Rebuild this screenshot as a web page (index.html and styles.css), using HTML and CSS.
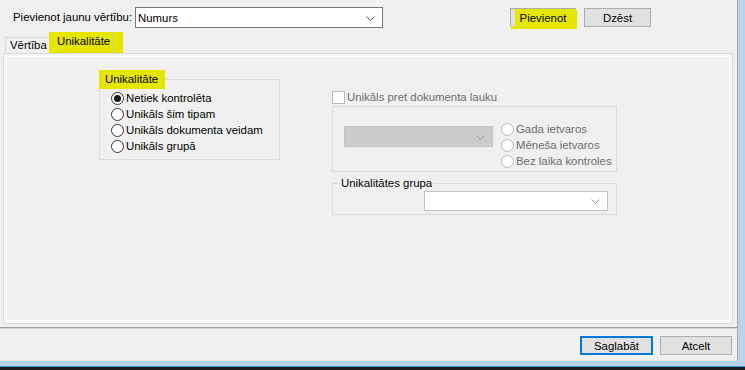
FILE: index.html
```html
<!DOCTYPE html>
<html>
<head>
<meta charset="utf-8">
<link rel="stylesheet" href="styles.css">
</head>
<body>
<div class="screen">
  <div class="window">
    <div class="toprow">
      <span class="lbl">Pievienot jaunu vērtību:</span>
      <div class="combo main-combo"><span class="combo-text">Numurs</span><svg class="chev" width="9" height="5" viewBox="0 0 9 5"><polyline points="0.5,0.5 4.5,4.5 8.5,0.5" fill="none" stroke="#555" stroke-width="1"/></svg></div>
      <button class="btn btn-add">Pievienot</button>
      <button class="btn btn-del">Dzēst</button>
    </div>
    <div class="tabs">
      <div class="tab">Vērtība</div>
      <div class="tab active">Unikalitāte</div>
    </div>
    <div class="tabpanel">
      <div class="page">
        <fieldset class="group uniq">
          <legend class="hl-legend">Unikalitāte</legend>
          <div class="radios">
            <label class="radio checked"><span class="circle"></span>Netiek kontrolēta</label>
            <label class="radio"><span class="circle"></span>Unikāls šim tipam</label>
            <label class="radio"><span class="circle"></span>Unikāls dokumenta veidam</label>
            <label class="radio"><span class="circle"></span>Unikāls grupā</label>
          </div>
        </fieldset>
        <div class="rightcol">
          <label class="check disabled"><span class="box"></span>Unikāls pret dokumenta lauku</label>
          <div class="subbox">
            <div class="combo dis-combo"><svg class="chev" width="9" height="5" viewBox="0 0 9 5"><polyline points="0.5,0.5 4.5,4.5 8.5,0.5" fill="none" stroke="#9a9a9a" stroke-width="1"/></svg></div>
            <div class="radios dis-radios">
              <label class="radio disabled"><span class="circle"></span>Gada ietvaros</label>
              <label class="radio disabled"><span class="circle"></span>Mēneša ietvaros</label>
              <label class="radio disabled"><span class="circle"></span>Bez laika kontroles</label>
            </div>
          </div>
          <fieldset class="group grp">
            <legend class="grp-legend">Unikalitātes grupa</legend>
            <div class="combo grp-combo"><svg class="chev" width="9" height="5" viewBox="0 0 9 5"><polyline points="0.5,0.5 4.5,4.5 8.5,0.5" fill="none" stroke="#9a9a9a" stroke-width="1"/></svg></div>
          </fieldset>
        </div>
      </div>
    </div>
    <div class="separator"></div>
    <div class="footer">
      <button class="btn btn-primary">Saglabāt</button>
      <button class="btn btn-cancel">Atcelt</button>
    </div>
  </div>
</div>
</body>
</html>
```
FILE: styles.css
```css
* { box-sizing: border-box; }
html, body { margin: 0; padding: 0; }
body {
  width: 745px;
  height: 370px;
  overflow: hidden;
  font-family: "Liberation Sans", Arial, sans-serif;
  font-size: 11.4px;
  color: #000;
}
.screen {
  width: 745px;
  height: 370px;
  background: #b9d1ea;
  padding: 0 7px 6px 0;
  border-bottom: 3px solid #1b1b1b;
  box-shadow: inset 0 -1px 0 #3a9ad9;
}
.window {
  width: 738px;
  height: 361px;
  background: #f0f0f0;
  border-right: 1px solid #a9a9a9;
  display: flex;
  flex-direction: column;
}
.toprow {
  display: flex;
  align-items: flex-start;
  padding: 7px 0 0 13px;
  height: 28px;
}
.lbl {
  width: 122px;
  line-height: 21px;
  white-space: nowrap;
}
.combo {
  position: relative;
  background: #fff;
  border: 1px solid #7a7a7a;
  display: flex;
  align-items: center;
}
.chev {
  position: absolute;
  right: 7px;
  top: 50%;
  margin-top: -2px;
}
.main-combo {
  width: 248px;
  height: 21px;
}
.combo-text { padding-left: 2px; }
.btn {
  font-family: inherit;
  font-size: 11.4px;
  color: #000;
  background: #e1e1e1;
  border: 1px solid #adadad;
  height: 19px;
  padding: 0;
  margin: 0;
}
.btn-add {
  margin: 1px 0 0 127px;
  width: 66px;
  background: linear-gradient(to right, #e1e1e1 4px, #e6e600 4px);
  border-right-color: #e6e600;
  border-bottom-color: #e6e600;
  box-shadow: 1px 2px 0 #e6e600;
}
.btn-del {
  margin: 1px 0 0 8px;
  width: 67px;
}
.tabs {
  display: flex;
  align-items: flex-end;
  margin-top: 4px;
  height: 21px;
  padding-left: 5px;
}
.tab {
  height: 16px;
  line-height: 15px;
  padding-left: 4px;
  width: 44px;
  border: 1px solid #d9d9d9;
  border-bottom: none;
  border-right: none;
  background: #f0f0f0;
  white-space: nowrap;
  overflow: hidden;
}
.tab.active {
  height: 21px;
  line-height: 19px;
  width: 74px;
  padding-left: 8px;
  border: none;
  background: #e6e600;
  box-shadow: inset -9px 0 0 #e6e600, inset -10px 0 0 #d0d0a0;
}
.tabpanel {
  margin-left: 3px;
  width: 730px;
  height: 271px;
  border: 1px solid #d9d9d9;
  background: #f8f8f8;
  padding: 2px;
}
.page {
  height: 100%;
  border: 1px solid #fff;
  background: #f0f0f0;
  display: flex;
  align-items: flex-start;
}
.group {
  margin: 0;
  padding: 0;
  border: 1px solid #dcdcdc;
  min-width: 0;
}
.uniq {
  margin: 13px 0 0 92px;
  width: 181px;
  padding-bottom: 5px;
}
.hl-legend {
  background: #e6e600;
  padding: 0 7px 0 6px;
  margin-left: -1px;
  line-height: 19px;
  height: 19px;
}
.radios {
  display: flex;
  flex-direction: column;
}
.uniq .radios {
  margin: 1px 0 0 11px;
}
.radio, .check {
  display: flex;
  align-items: center;
  height: 16px;
  white-space: nowrap;
}
.circle {
  width: 13px;
  height: 13px;
  border: 1px solid #333;
  border-radius: 50%;
  background: #fff;
  margin-right: 2px;
  display: flex;
  align-items: center;
  justify-content: center;
  flex: none;
}
.radio.checked .circle::after {
  content: "";
  width: 7px;
  height: 7px;
  border-radius: 50%;
  background: #1a1a1a;
}
.radio.disabled, .check.disabled { color: #6d6d6d; }
.radio.disabled .circle { border-color: #bcbcbc; }
.rightcol {
  margin: 32px 0 0 52px;
  width: 285px;
  display: flex;
  flex-direction: column;
}
.box {
  width: 13px;
  height: 13px;
  border: 1px solid #bcbcbc;
  background: #fff;
  margin-right: 2px;
  flex: none;
}
.subbox {
  margin-top: 1px;
  height: 66px;
  border: 1px solid #dcdcdc;
  display: flex;
  align-items: flex-start;
  padding: 14px 0 0 11px;
}
.dis-combo {
  margin-top: 5px;
  width: 149px;
  height: 21px;
  background: #cccccc;
  border-color: #c4c4c4;
}
.dis-radios {
  margin-left: 8px;
}
.grp {
  margin-top: 4px;
  width: 285px;
  padding: 0 8px 3px 0;
  display: flex;
  flex-direction: column;
  align-items: flex-end;
}
.grp-legend {
  margin-left: 7px;
  padding: 0 1px;
  line-height: 15px;
  height: 15px;
}
.grp-combo {
  width: 184px;
  height: 20px;
  border-color: #c4c4c4;
}
.separator {
  margin-top: 3px;
  height: 2px;
  border-top: 1px solid #a0a0a0;
  border-bottom: 1px solid #d2d2d2;
}
.footer {
  display: flex;
  justify-content: flex-end;
  gap: 7px;
  padding: 7px 5px 0 0;
}
.btn-primary {
  width: 73px;
  border: 2px solid #0078d7;
}
.btn-cancel {
  width: 72px;
}
```
